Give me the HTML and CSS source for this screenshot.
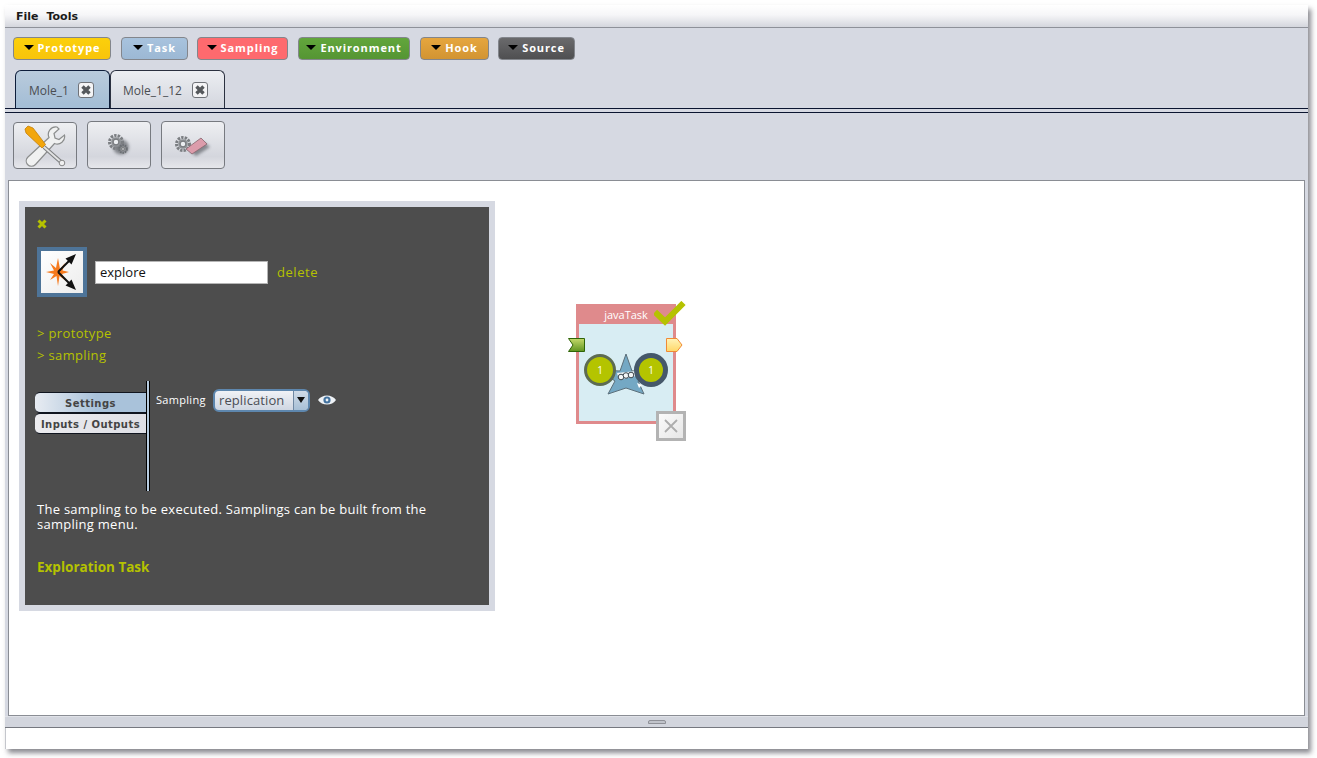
FILE: index.html
```html
<!DOCTYPE html>
<html lang="en">
<head>
<meta charset="utf-8">
<title>Mole</title>
<link rel="stylesheet" href="styles.css">
</head>
<body>
<div class="window">
  <header class="menubar"><span>File</span><span>Tools</span></header>
  <nav class="palette">
    <button class="pill pill-prototype"><i class="caret"></i>Prototype</button>
    <button class="pill pill-task"><i class="caret"></i>Task</button>
    <button class="pill pill-sampling"><i class="caret"></i>Sampling</button>
    <button class="pill pill-environment"><i class="caret"></i>Environment</button>
    <button class="pill pill-hook"><i class="caret"></i>Hook</button>
    <button class="pill pill-source"><i class="caret"></i>Source</button>
  </nav>
  <div class="tabs">
    <div class="tab tab-active">Mole_1
      <span class="tab-close"><svg viewBox="0 0 12 12" width="12" height="12"><path d="M2.500 2.500L9.500 9.500M9.500 2.500L2.500 9.500" stroke="#55585c" stroke-width="3.400"/></svg></span>
    </div>
    <div class="tab tab-second">Mole_1_12
      <span class="tab-close"><svg viewBox="0 0 12 12" width="12" height="12"><path d="M2.500 2.500L9.500 9.500M9.500 2.500L2.500 9.500" stroke="#55585c" stroke-width="3.400"/></svg></span>
    </div>
  </div>
  <div class="tools">
    <button class="tool tool-first">
      <svg viewBox="0 0 42 42" width="42" height="42">
        <path d="M33 2a7.500 7.500 0 0 0-8 10.500L4 32a5.500 5.500 0 0 0-.5 7.500 5.500 5.500 0 0 0 8 0l19-21a7.500 7.500 0 0 0 10-8.500l-5.500 4.500-4-1.500-1-4.500 5-4.500z" fill="#f0f1f1" stroke="#8b8d8d" stroke-width="1.200"/>
        <path d="M20 22L37 37" stroke="#7d7f80" stroke-width="4"/>
        <path d="M20 22L37 37" stroke="#e2e3e3" stroke-width="1.800"/>
        <circle cx="38" cy="38" r="2.800" fill="#f0f0f0" stroke="#888"/>
        <path d="M4 1L1 4 2 8 18 23 21.500 19.500 9 3z" fill="#f2a60c" stroke="#c47f08" stroke-width=".8"/>
      </svg>
    </button>
    <button class="tool">
      <svg viewBox="0 0 26 26" width="26" height="26">
        <ellipse class="blur" cx="15" cy="15" rx="8" ry="7.500"/>
        <circle cx="10" cy="10" r="6.500" fill="none" stroke="#7b7e82" stroke-width="3" stroke-dasharray="2.400 1.100"/>
        <circle cx="10" cy="10" r="4.800" fill="#8d9094"/>
        <circle cx="10" cy="10" r="2.800" fill="#eceef1" stroke="#5e6164" stroke-width=".8"/>
        <circle cx="17" cy="17" r="3.800" fill="none" stroke="#6a6e72" stroke-width="2" stroke-dasharray="1.600 .8"/>
        <circle cx="17" cy="17" r="2.500" fill="#8d9094"/>
        <circle cx="17" cy="17" r="1.300" fill="#dfe2e6" stroke="#555" stroke-width=".6"/>
      </svg>
    </button>
    <button class="tool">
      <svg viewBox="0 0 38 26" width="38" height="26">
        <path class="blur" d="M16 19L30 10 36 15 22 24z"/>
        <circle cx="9" cy="12" r="6.500" fill="none" stroke="#7b7e82" stroke-width="3" stroke-dasharray="2.400 1.100"/>
        <circle cx="9" cy="12" r="4.800" fill="#8d9094"/>
        <circle cx="9" cy="12" r="2.800" fill="#eceef1" stroke="#5e6164" stroke-width=".8"/>
        <path d="M12 17L27 6 33 12 18 22z" fill="#dc9cab" stroke="#86656d" stroke-width=".8"/>
      </svg>
    </button>
  </div>
  <main class="canvas">
    <section class="panel">
      <svg class="panel-x" viewBox="0 0 10 10" width="10" height="10"><path d="M1.500 1.500L8.500 8.500M8.500 1.500L1.500 8.500" stroke="#b5c200" stroke-width="3"/></svg>
      <div class="name-row">
        <div class="task-icon">
          <svg viewBox="0 0 42 42" width="42" height="42">
            <path d="M17 7L19 18 24 12 21.500 19.500 28 21 21 23 25 30 18.500 25 17 35 15.500 25 9 29 13 23 5 21 13 19.500 9 12 15 17z" fill="#f67a1e"/>
            <path d="M17 21L31 7M17 21L31 35" stroke="#111" stroke-width="2"/>
            <path d="M35 3L24.500 7.500 30.500 13.500zM35 39L24.500 34.500 30.500 28.500z" fill="#111"/>
          </svg>
        </div>
        <input class="name-input" type="text" value="explore">
        <span class="delete">delete</span>
      </div>
      <div class="links">
        <div>&gt; prototype</div>
        <div>&gt; sampling</div>
      </div>
      <div class="settings">
        <div class="side-tabs">
          <div class="side-tab side-tab-active">Settings</div>
          <div class="side-tab">Inputs / Outputs</div>
        </div>
        <div class="side-rule"></div>
        <div class="field">
          <span class="field-label">Sampling</span>
          <div class="combo"><span class="combo-text">replication</span><span class="combo-arrow"></span></div>
          <svg class="eye" viewBox="0 0 20 12" width="20" height="12">
            <path d="M1 6C5 0 15 0 19 6 15 12 5 12 1 6z" fill="#eef2f6"/>
            <circle cx="10" cy="6" r="3.600" fill="#44739f"/>
            <circle cx="10" cy="6" r="1.400" fill="#eef2f6"/>
          </svg>
        </div>
      </div>
      <p class="help">The sampling to be executed. Samplings can be built from the sampling menu.</p>
      <h2 class="panel-title">Exploration Task</h2>
    </section>

    <div class="capsule">
      <div class="capsule-title">javaTask</div>
      <div class="capsule-body">
        <svg class="capsule-art" viewBox="0 0 86 50" width="86" height="50">
          <path d="M42 2L48 19 69 18 54 29 60 42 42 36 24 42 31 29 15 18 36 19z" fill="#74a8c4" stroke="#5c6f7a"/>
          <path d="M33 21l19-2v5l-17 4z" fill="#eef3f4"/>
          <circle cx="37" cy="25" r="2.800" fill="#f4f6f6" stroke="#3d4750"/>
          <circle cx="42" cy="23.500" r="2.800" fill="#f4f6f6" stroke="#3d4750"/>
          <circle cx="47" cy="23" r="2.800" fill="#f4f6f6" stroke="#3d4750"/>
          <path d="M53 31l5 2-3 3z" fill="#fff"/>
          <circle cx="16" cy="18" r="14.500" fill="#b4c400" stroke="#5d6b52" stroke-width="3"/>
          <circle cx="67" cy="18" r="14.500" fill="#b4c400" stroke="#45586a" stroke-width="5"/>
          <text class="count" x="16" y="21.500" text-anchor="middle">1</text>
          <text class="count" x="67" y="21.500" text-anchor="middle">1</text>
        </svg>
      </div>
      <svg class="slot-in" viewBox="0 0 17 14" width="17" height="14"><defs><linearGradient id="gi" x1="0" y1="0" x2="0" y2="1"><stop offset="0" stop-color="#c4d96a"/><stop offset="1" stop-color="#5f9420"/></linearGradient></defs><path d="M.5 .5H16.500V13.500H.5L5 7z" fill="url(#gi)" stroke="#2f6408"/></svg>
      <svg class="slot-out" viewBox="0 0 17 14" width="17" height="14"><defs><linearGradient id="go" x1="0" y1="0" x2="0" y2="1"><stop offset="0" stop-color="#fff3b8"/><stop offset="1" stop-color="#ffd768"/></linearGradient></defs><path d="M.5 .5H11L16 7 11 13.500H.5z" fill="url(#go)" stroke="#f08a35"/></svg>
      <svg class="check" viewBox="0 0 32 26" width="32" height="26"><path d="M1 11L11 20.500 29.500 2" fill="none" stroke="#b5c200" stroke-width="6"/></svg>
      <div class="capsule-remove"><svg viewBox="0 0 14 14" width="14" height="14"><path d="M1 1L13 13M13 1L1 13" stroke="#adadad" stroke-width="1.800"/></svg></div>
    </div>
  </main>
  <div class="splitter"><span class="grip"></span></div>
  <footer class="status"></footer>
</div>
</body>
</html>
```
FILE: styles.css
```css
* { box-sizing: border-box; }
html, body { margin: 0; height: 100%; background: #fff; }
body { padding: 5px 9px 9px 5px; font-family: "Open Sans", "DejaVu Sans", sans-serif; overflow: hidden; }
.window {
  width: 1303px; height: 744px; background: #d6d9e2;
  box-shadow: 3px 4px 5px rgba(60,60,70,.6);
  display: flex; flex-direction: column;
}
.menubar {
  height: 23px; flex: none; display: flex; gap: 8px; padding: 5px 0 0 11px;
  font: bold 11px/14px "DejaVu Sans", sans-serif; color: #1a1a1a;
  background: linear-gradient(#ffffff 0, #f6f6f8 45%, #d4d6dd 100%);
  border-bottom: 1px solid #8e9199;
}
.palette { height: 42px; flex: none; display: flex; padding: 9px 0 0 8px; }
.pill {
  height: 23px; padding: 0 0 2px; margin-right: 10px; border: 1px solid #83868c; border-radius: 4px;
  display: flex; align-items: center; justify-content: center; gap: 4px;
  font: bold 11px/1 "Open Sans", sans-serif; letter-spacing: .9px; color: #fff;
}
.caret { width: 0; height: 0; border: 5px solid transparent; border-top: 5px solid #000; border-bottom: 0; }
.pill-prototype { width: 98px; background: linear-gradient(#fcd00b,#f8c40b); }
.pill-task { width: 67px; margin-right: 9px; background: linear-gradient(#a8c3de,#9cb8d4); }
.pill-sampling { width: 91px; background: #fe6a6e; }
.pill-environment { width: 112px; background: linear-gradient(#62a63c,#559533); }
.pill-hook { width: 69px; margin-right: 9px; background: linear-gradient(#e6a63e,#d29432); }
.pill-source { width: 77px; background: linear-gradient(#6a6a6c,#4f4f51); }

.tabs {
  height: 39px; flex: none; display: flex; padding-left: 10px;
  border-bottom: 1px solid #0b1530; font-size: 12px; color: #444;
}
.tab {
  height: 38px; display: flex; align-items: center; padding-top: 1px;
  border: 1px solid #2b3140; border-bottom: 0; border-radius: 6px 6px 0 0;
  background: linear-gradient(#eceef2,#d3d6de);
  color: #4a4d52;
}
.tab-active { width: 95px; padding-left: 13px; border-color: #0d1d3a; background: linear-gradient(#b9cbdc,#a5bed6 90%); }
.tab-second { width: 115px; padding-left: 12px; }
.tab-close {
  width: 16px; height: 16px; margin-left: 9px; border: 1px solid #6f7278; border-radius: 3px;
  background: #f4f4f6; display: flex; align-items: center; justify-content: center;
}
.tab-second .tab-close { margin-left: 10px; }

.tools {
  height: 68px; flex: none; display: flex; gap: 10px; padding: 8px 0 0 8px; border-top: 1px solid #0b1530; margin-top: 3px;
}
.tool {
  width: 64px; height: 48px; padding: 0; border: 1px solid #777a80; border-radius: 4px;
  background: linear-gradient(#eeeff2,#d4d6dd 75%,#e6e7eb);
  display: flex; align-items: center; justify-content: center;
}
.tool-first { height: 47px; margin-top: 1px; }
.blur { fill: #30343a; opacity: .5; filter: blur(1.500px); }

.canvas {
  position: relative; flex: none; height: 536px; margin: 0 3px; background: #fff;
  border: 1px solid #8a8d94;
}
.panel {
  position: absolute; left: 10px; top: 20px; width: 476px; height: 410px;
  background: #4d4d4d; border: 6px solid #d6d9e2; padding: 12px;
  color: #fff; font-size: 13px;
}
.panel-x { display: block; margin-bottom: 18px; }
.name-row { display: flex; align-items: center; }
.task-icon {
  width: 50px; height: 50px; border: 4px solid #4e7498; background: linear-gradient(135deg,#fff,#ececec);
}
.task-icon svg { display: block; }
.name-input {
  width: 173px; height: 23px; margin-left: 8px; padding: 0 4px; border: 1px solid #b5b5b5; border-radius: 0;
  font: 13px "Open Sans", "DejaVu Sans", sans-serif; color: #111; background: #fff;
}
.delete { margin-left: 9px; color: #b5c200; font-size: 13px; letter-spacing: .55px; }
.links { margin-top: 25px; color: #b5c200; font-size: 13px; letter-spacing: .35px; line-height: 22px; }
.settings { display: flex; margin-top: 15px; height: 110px; margin-left: -2px; }
.side-tabs { width: 111px; padding-top: 11px; flex: none; }
.side-tab {
  height: 21px; width: 111px; border-bottom: 1px solid #10151f; border-top: 1px solid #10151f; border-radius: 5px 0 0 5px;
  background: linear-gradient(90deg,#ececef,#dedfe5);
  color: #444; font: bold 10px/21px "DejaVu Sans", sans-serif; letter-spacing: .45px; text-align: center; white-space: nowrap;
}
.side-tab-active { background: linear-gradient(90deg,#e8ecf2,#a9c2da 55%); }
.side-rule { width: 4px; flex: none; background: #b7cce0; border-left: 1px solid #000; border-right: 1px solid #000; }
.field { display: flex; align-items: flex-start; padding-top: 8px; margin-left: 6px; }
.field-label { font-size: 11px; letter-spacing: .3px; line-height: 22px; margin-right: 7px; width: 50px; }
.combo {
  width: 97px; height: 23px; display: flex; border: 2px solid #5e87ae; border-radius: 6px;
  background: linear-gradient(#f0f2f6,#cfd6e2); color: #4a4d55; font-size: 13px; letter-spacing: .1px; line-height: 18px; overflow: hidden;
}
.combo-text { flex: 1; padding-left: 4px; }
.combo-arrow {
  width: 15px; position: relative; border-left: 1px solid #6f88a3; background: linear-gradient(#d0dbe7,#a7bfd6);
}
.combo-arrow::after {
  content: ""; position: absolute; left: 3px; top: 6px; border: 4px solid transparent; border-top: 6px solid #111; border-bottom: 0;
}
.eye { margin: 5px 0 0 7px; }
.help { margin: 11px 0 0; width: 420px; font-size: 13px; letter-spacing: .27px; line-height: 15px; color: #fff; }
.panel-title { margin: 26px 0 0; font-size: 13.500px; font-weight: 700; line-height: 18px; color: #b5c200; }

.capsule {
  position: absolute; left: 567px; top: 123px; width: 100px; height: 120px;
  background: #d8edf3; border: 3px solid #df8a8c; border-top: 0;
}
.capsule-title {
  height: 20px; margin: 0 -3px; background: #df8a8c; color: #fff; font-size: 11px; line-height: 21px; text-align: center;
}
.capsule-art { position: absolute; left: 5px; top: 48px; }
.count { font: 10px "Open Sans", sans-serif; fill: #fff; }
.slot-in { position: absolute; left: -11px; top: 34px; }
.slot-out { position: absolute; left: 87px; top: 34px; }
.check { position: absolute; left: 75px; top: -3px; }
.capsule-remove {
  position: absolute; left: 77px; top: 107px; width: 30px; height: 30px; border: 3px solid #b3b3b3;
  background: linear-gradient(135deg,#fbfbfb,#e6e6e6); display: flex; align-items: center; justify-content: center;
}
.splitter {
  height: 12px; flex: none; display: flex; justify-content: center; border-top: 1px solid #e0e2e8; border-bottom: 1px solid #75787f; background: #d2d5dd;
}
.grip { width: 18px; height: 4px; margin-top: 3px; border: 1px solid #8e9097; border-radius: 2px 2px 0 0; background: #c0c3ca; }
.status { flex: 1; background: #fff; border-left: 1px solid #c4c6cc; }
```
